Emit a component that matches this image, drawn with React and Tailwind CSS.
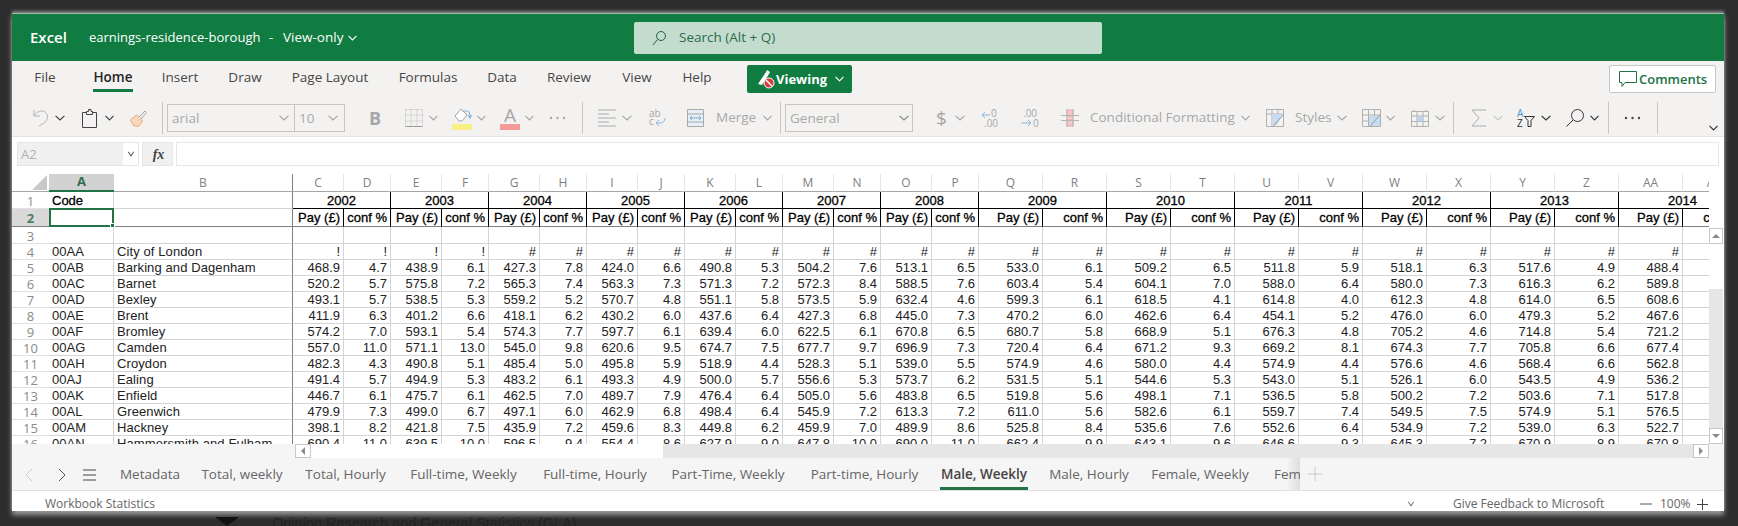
import React from "react";

const COLS = ["A","B","C","D","E","F","G","H","I","J","K","L","M","N","O","P","Q","R","S","T","U","V","W","X","Y","Z","AA","AB"];
const YEARS = [2002,2003,2004,2005,2006,2007,2008,2009,2010,2011,2012,2013,2014];
const ROWS = [
  ["00AB","Barking and Dagenham","468.9 4.7 438.9 6.1 427.3 7.8 424.0 6.6 490.8 5.3 504.2 7.6 513.1 6.5 533.0 6.1 509.2 6.5 511.8 5.9 518.1 6.3 517.6 4.9 488.4"],
  ["00AC","Barnet","520.2 5.7 575.8 7.2 565.3 7.4 563.3 7.3 571.3 7.2 572.3 8.4 588.5 7.6 603.4 5.4 604.1 7.0 588.0 6.4 580.0 7.3 616.3 6.2 589.8"],
  ["00AD","Bexley","493.1 5.7 538.5 5.3 559.2 5.2 570.7 4.8 551.1 5.8 573.5 5.9 632.4 4.6 599.3 6.1 618.5 4.1 614.8 4.0 612.3 4.8 614.0 6.5 608.6"],
  ["00AE","Brent","411.9 6.3 401.2 6.6 418.1 6.2 430.2 6.0 437.6 6.4 427.3 6.8 445.0 7.3 470.2 6.0 462.6 6.4 454.1 5.2 476.0 6.0 479.3 5.2 467.6"],
  ["00AF","Bromley","574.2 7.0 593.1 5.4 574.3 7.7 597.7 6.1 639.4 6.0 622.5 6.1 670.8 6.5 680.7 5.8 668.9 5.1 676.3 4.8 705.2 4.6 714.8 5.4 721.2"],
  ["00AG","Camden","557.0 11.0 571.1 13.0 545.0 9.8 620.6 9.5 674.7 7.5 677.7 9.7 696.9 7.3 720.4 6.4 671.2 9.3 669.2 8.1 674.3 7.7 705.8 6.6 677.4"],
  ["00AH","Croydon","482.3 4.3 490.8 5.1 485.4 5.0 495.8 5.9 518.9 4.4 528.3 5.1 539.0 5.5 574.9 4.6 580.0 4.4 574.9 4.4 576.6 4.6 568.4 6.6 562.8"],
  ["00AJ","Ealing","491.4 5.7 494.9 5.3 483.2 6.1 493.3 4.9 500.0 5.7 556.6 5.3 573.7 6.2 531.5 5.1 544.6 5.3 543.0 5.1 526.1 6.0 543.5 4.9 536.2"],
  ["00AK","Enfield","446.7 6.1 475.7 6.1 462.5 7.0 489.7 7.9 476.4 6.4 505.0 5.6 483.8 6.5 519.8 5.6 498.1 7.1 536.5 5.8 500.2 7.2 503.6 7.1 517.8"],
  ["00AL","Greenwich","479.9 7.3 499.0 6.7 497.1 6.0 462.9 6.8 498.4 6.4 545.9 7.2 613.3 7.2 611.0 5.6 582.6 6.1 559.7 7.4 549.5 7.5 574.9 5.1 576.5"],
  ["00AM","Hackney","398.1 8.2 421.8 7.5 435.9 7.2 459.6 8.3 449.8 6.2 459.9 7.0 489.9 8.6 525.8 8.4 535.6 7.6 552.6 6.4 534.9 7.2 539.0 6.3 522.7"],
  ["00AN","Hammersmith and Fulham","690.4 11.0 639.5 10.0 596.5 9.4 554.4 8.6 627.9 9.0 647.8 10.0 690.0 11.0 662.4 9.9 643.1 9.6 646.6 9.3 645.3 7.2 670.9 8.9 670.8"],
];

const grid = "border-r border-b border-[#d4d4d4]";
const freeze = "border-r border-b border-r-[#808080] border-b-[#d4d4d4]";
const heavy = "text-black [-webkit-text-stroke:0.3px_black]";

function Chev({ c = "#a6a6a6", w = 9, className = "" }) {
  return (
    <svg width={w} height="6" viewBox="0 0 9 6" className={"shrink-0 " + className} preserveAspectRatio="none">
      <path d="M.5 .8 4.5 5 8.5 .8" fill="none" stroke={c} strokeWidth="1.1" />
    </svg>
  );
}
function Sep({ className = "" }) {
  return <div className={"w-px h-[32px] bg-[#c8c6c4] shrink-0 " + className} />;
}
function Dots({ c, className = "" }) {
  return (
    <svg width="17" height="4" viewBox="0 0 17 4" className={"shrink-0 " + className}>
      <circle cx="2" cy="2" r="1.2" fill={c} /><circle cx="8.5" cy="2" r="1.2" fill={c} /><circle cx="15" cy="2" r="1.2" fill={c} />
    </svg>
  );
}
function Ico({ w, h = 18, className = "", children }) {
  return (
    <svg width={w} height={h} viewBox={`0 0 ${w} ${h}`} fill="none" className={"shrink-0 " + className}>
      {children}
    </svg>
  );
}

function Toolbar() {
  const dim = "text-[13.5px] text-[#a8a8a8] whitespace-nowrap leading-none shrink-0";
  return (
    <div className="h-[37px] flex items-center bg-[#f3f2f1] border-b border-[#e4e3e2] shadow-[0_1px_2px_rgba(0,0,0,0.06)]">
      <Ico w={16} className="ml-[21px]"><path d="M1 1v6h6M1 7C4 2 9 1 12 3c4 3 3 8-1 11l-5 3" stroke="#b5b5b5" /></Ico>
      <Chev c="#444" w={10} className="ml-[6px]" />
      <Ico w={15} h={19} className="ml-[17px]"><path d="M4.5 3.5H.5v15h14v-15h-4M4.5 5.5v-3h2V.5h2.5v2h1.500v3z" stroke="#444" /></Ico>
      <Chev c="#444" className="ml-[8px]" />
      <Ico w={17} h={17} className="ml-[16px]">
        <path d="M.5 10 6.500 5l6 6-4 5.500-5-1z" fill="#f8d9bd" stroke="#eaa874" />
        <path d="M9 7l6-6 1.500 1.500L11 9" fill="#eee" stroke="#a6a6a6" />
      </Ico>
      <Sep className="ml-[15px]" />
      <div className="ml-[4px] w-[178px] h-[28px] flex border border-[#c8c6c4] shrink-0">
        <div className="w-[127px] flex items-center justify-between pl-[4px] pr-[5px] border-r border-[#c8c6c4]">
          <span className="text-[13.5px] text-[#a8a8a8]">arial</span><Chev c="#a6a6a6" w={10} />
        </div>
        <div className="flex-1 flex items-center justify-between pl-[4px] pr-[6px]">
          <span className="text-[13.5px] text-[#a8a8a8]">10</span><Chev c="#a6a6a6" w={10} />
        </div>
      </div>
      <span className="ml-[24px] w-[11px] text-[18px] font-bold leading-none text-[#a6a6a6] shrink-0">B</span>
      <Ico w={18} className="ml-[25px]">
        <path d="M.5 .5h17v17H.5zM.5 6h17M.5 12h17M6 .5v17M12 .5v17" stroke="#bdbdbd" strokeDasharray="1 1" />
        <path d="M.5 17.500h17" stroke="#9a9a9a" />
      </Ico>
      <Chev className="ml-[6px]" />
      <div className="ml-[14px] w-[20px] h-[22px] flex flex-col justify-between shrink-0 mt-[2px]">
        <Ico w={20} h={15}>
          <path d="M3 8 9 1l6 6-5 6H7z" stroke="#a3a3a3" fill="#fff" />
          <path d="M10 3h5c2 0 3 2 3 6M16 7l2 3 1.500-3" stroke="#8fb4da" strokeWidth="1.200" />
        </Ico>
        <div className="h-[6px] bg-[#f8ef85]" />
      </div>
      <Chev className="ml-[5px]" />
      <div className="ml-[14px] w-[20px] h-[24px] flex flex-col items-center justify-between shrink-0">
        <span className="text-[19px] leading-[18px] text-[#a6a6a6]">A</span>
        <div className="h-[6px] w-full bg-[#f49a9a]" />
      </div>
      <Chev className="ml-[5px]" />
      <Dots c="#a6a6a6" className="ml-[15px]" />
      <Sep className="ml-[16px]" />
      <Ico w={18} className="ml-[15px]"><path d="M0 1h18M0 5h11M0 9h18M0 13h11M0 17h18" stroke="#aaa" /></Ico>
      <Chev w={10} className="ml-[6px]" />
      <Ico w={18} className="ml-[16px]">
        <text x="1" y="8" fontSize="10" fill="#a6a6a6" fontFamily="Open Sans, sans-serif">ab</text>
        <text x="1" y="16" fontSize="10" fill="#a6a6a6" fontFamily="Open Sans, sans-serif">c</text>
        <path d="M17 9c0 3-2 5-5 5H8m3-3-3 3 3 3" stroke="#8db4da" />
      </Ico>
      <Ico w={17} className="ml-[21px]">
        <path d="M.5 .5h16v17H.5z" fill="#e6eef6" stroke="#a9a9a9" />
        <path d="M.5 5h16M.5 13h16" stroke="#a9a9a9" />
        <path d="M3 9h11M5 7 3 9l2 2M12 7l2 2-2 2" stroke="#7fa9d4" />
      </Ico>
      <span className={"ml-[12px] w-[40px] " + dim}>Merge</span>
      <Chev className="ml-[7px]" />
      <Sep className="ml-[8px]" />
      <div className="ml-[4px] w-[128px] h-[28px] flex items-center justify-between border border-[#c8c6c4] pl-[4px] pr-[3px] shrink-0">
        <span className="text-[13.5px] text-[#a8a8a8]">General</span><Chev c="#8a8a8a" w={10} />
      </div>
      <span className="ml-[23px] w-[9px] text-[19px] leading-none text-[#a6a6a6] shrink-0">$</span>
      <Chev w={10} className="ml-[10px]" />
      <Ico w={19} className="ml-[16px]">
        <text x="10" y="8" fontSize="10" fill="#a6a6a6" fontFamily="Open Sans, sans-serif">0</text>
        <text x="3" y="17.500" fontSize="10" fill="#a6a6a6" fontFamily="Open Sans, sans-serif">.00</text>
        <path d="M9 6H1m3-3L1 6l3 3" stroke="#8db4da" />
      </Ico>
      <Ico w={20} className="ml-[20px]">
        <text x="3" y="8" fontSize="10" fill="#a6a6a6" fontFamily="Open Sans, sans-serif">.00</text>
        <text x="13" y="17.500" fontSize="10" fill="#a6a6a6" fontFamily="Open Sans, sans-serif">0</text>
        <path d="M1 14h10m-3-3 3 3-3 3" stroke="#8db4da" />
      </Ico>
      <Ico w={18} className="ml-[21px]">
        <path d="M6 1h6v7H6zM6 10h6v7H6z" fill="#f7c6c6" stroke="#e9a9a9" />
        <path d="M0 6.500h18M0 11.500h18M6 0v18M12 0v18" stroke="#b5b5b5" />
      </Ico>
      <span className={"ml-[11px] w-[143px] " + dim}>Conditional Formatting</span>
      <Chev className="ml-[8px]" />
      <Ico w={18} className="ml-[16px]">
        <path d="M.5 .5h17v17H.5z" stroke="#b0b0b0" />
        <path d="M.5 5h17M.5 5v12M6 .5v17M12 .5v5" stroke="#b0b0b0" />
        <path d="M6 5h11l-6 11H6z" fill="#c6dcf0" />
        <path d="M17 6 9 15l-2 3" stroke="#9a9a9a" />
      </Ico>
      <span className={"ml-[11px] w-[35px] " + dim}>Styles</span>
      <Chev w={10} className="ml-[7px]" />
      <Ico w={19} className="ml-[15px]">
        <path d="M.5 .5h18v17H.5z" stroke="#b0b0b0" />
        <path d="M.5 6h18M.5 12h18M6.500 .5v17M12.500 .5v17" stroke="#b0b0b0" />
        <path d="M7 7h11v10H7z" fill="#c6dcf0" />
        <path d="M18 6 10 15l-2 3" stroke="#9a9a9a" />
      </Ico>
      <Chev className="ml-[5px]" />
      <Ico w={18} className="ml-[16px]">
        <path d="M.5 2.500h17v15H.5z" stroke="#b0b0b0" />
        <path d="M.5 7h17M.5 12.500h17M6 2.500v15M12 2.500v15M3 .5v2M15 .5v2" stroke="#b0b0b0" />
        <path d="M6 7h6v5.500H6z" fill="#bcd5ec" />
      </Ico>
      <Chev w={10} className="ml-[6px]" />
      <Sep className="ml-[8px]" />
      <Ico w={15} className="ml-[17px]"><path d="M15 1H1l7 8-7 8h14" stroke="#aaa" /></Ico>
      <Chev w={10} c="#c8c8c8" className="ml-[7px]" />
      <Ico w={18} className="ml-[14px]">
        <text x="0" y="8" fontSize="10" fill="#4a90d0" fontFamily="Open Sans, sans-serif">A</text>
        <text x="0" y="18" fontSize="10" fill="#333" fontFamily="Open Sans, sans-serif">Z</text>
        <path d="M7.500 7.500h10l-3.500 4v6h-3v-6z" stroke="#333" />
      </Ico>
      <Chev c="#333" w={10} className="ml-[6px]" />
      <Ico w={18} className="ml-[15px]"><circle cx="11.500" cy="6.500" r="6" stroke="#333" /><path d="M7 11 .5 17.500" stroke="#333" /></Ico>
      <Chev c="#333" className="ml-[6px]" />
      <Sep className="ml-[9px]" />
      <Dots c="#444" className="ml-[15px]" />
      <Sep className="ml-[16px]" />
      <Chev c="#333" className="ml-[51px] mt-[20px]" />
    </div>
  );
}

function MenuItem({ w, active, children }) {
  return (
    <div className={"h-[31px] flex justify-center " + w}>
      <div className={"h-full pt-[7px] text-[13.5px] leading-[18px] whitespace-nowrap text-center border-b-[3px] " + (active ? "border-[#107c41] text-[#252423] font-semibold" : "border-transparent text-[#484644]")}>{children}</div>
    </div>
  );
}

function Menu() {
  return (
    <div className="h-[39px] flex items-start bg-[#f3f2f1] pl-[4px]">
      <MenuItem w="w-[58px]">File</MenuItem>
      <MenuItem w="w-[78px]" active>Home</MenuItem>
      <MenuItem w="w-[56px]">Insert</MenuItem>
      <MenuItem w="w-[74px]">Draw</MenuItem>
      <MenuItem w="w-[96px]">Page Layout</MenuItem>
      <MenuItem w="w-[100px]">Formulas</MenuItem>
      <MenuItem w="w-[48px]">Data</MenuItem>
      <MenuItem w="w-[86px]">Review</MenuItem>
      <MenuItem w="w-[50px]">View</MenuItem>
      <MenuItem w="w-[70px]">Help</MenuItem>
      <div className="ml-[15px] mt-[4px] w-[105px] h-[28px] bg-[#107c41] rounded-[2px] flex items-center pl-[10px] text-white shrink-0">
        <Ico w={18} h={20}>
          <path d="M1 15 9 3l3 2-7 11z" fill="#fff" />
          <path d="M9 3l1-2 3 2-1 2" fill="#fff" />
          <circle cx="12" cy="14" r="5" fill="#d83b3b" stroke="#fff" />
          <path d="M9 11l6 6" stroke="#fff" strokeWidth="1.500" />
        </Ico>
        <span className="ml-[1px] w-[52px] text-[13px] font-bold whitespace-nowrap leading-none">Viewing</span>
        <Chev c="#fff" className="ml-[7px]" />
      </div>
      <div className="ml-[757px] mt-[4px] w-[107px] h-[28px] bg-white border border-[#c8c6c4] rounded-[2px] flex items-center pl-[9px] shrink-0">
        <Ico w={19} h={18}>
          <path d="M.5 1.500h17v11H6l-3 4v-4H.5z" stroke="#217346" />
        </Ico>
        <span className="ml-[1px] text-[13px] font-semibold text-[#217346] whitespace-nowrap leading-none">Comments</span>
      </div>
    </div>
  );
}

function Cell({ className = "", children }) {
  return <div className={"flex items-center whitespace-nowrap overflow-hidden leading-none px-[3px] " + className}>{children}</div>;
}

function RowHead({ n, selected }) {
  return (
    <div className={"flex items-center justify-center leading-none text-[13px] pt-[2px] font-['Open_Sans',sans-serif] " + (selected ? "bg-[#d9d9d9] font-bold text-[#4f7f62] border-b border-[#808080]" : "bg-white text-[#8a8a8a] border-b border-[#e2e2e2]")}>
      {n}
    </div>
  );
}

function Sheet() {
  const cols = COLS.slice(2);
  return (
    <div className="w-[1697px] h-[270px] overflow-hidden shrink-0">
      <div className="grid w-[1735px] grid-cols-[37px_65px_179px_51px_47px_51px_47px_51px_47px_51px_47px_51px_47px_51px_47px_51px_47px_64px_64px_64px_64px_64px_64px_64px_64px_64px_64px_64px_64px] auto-rows-[16px] grid-rows-[18px_17px_18px_17px] font-['Liberation_Sans',Arial,sans-serif] text-[13px] text-[#222]">
        {/* column headers */}
        <div className="bg-white border-b border-[#a6a6a6] flex items-center justify-end pr-[2px]">
          <svg width="15" height="15" viewBox="0 0 15 15"><path d="M15 0v15H0z" fill="#c9c9c9" /></svg>
        </div>
        <div className="bg-[#d2d2d2] border-b-2 border-[#217346] flex items-center justify-center text-[13px] font-bold text-[#2f6f4b] font-['Open_Sans',sans-serif]">A</div>
        <div className="bg-white border-b border-r border-b-[#a6a6a6] border-r-[#808080] flex items-center justify-center text-[12px] text-[#808080] font-['Open_Sans',sans-serif]">B</div>
        {cols.map((c) => (
          <div key={c} className="bg-white border-b border-r border-b-[#a6a6a6] border-r-[#e6e6e6] flex items-center justify-center text-[12px] text-[#808080] font-['Open_Sans',sans-serif]">{c}</div>
        ))}

        {/* row 1 */}
        <RowHead n={1} />
        <Cell className={heavy + " " + grid}>Code</Cell>
        <Cell className={freeze} />
        {YEARS.map((y) => (
          <Cell key={y} className={"col-span-2 justify-center border-r border-b border-black " + heavy}>{y}</Cell>
        ))}

        {/* row 2 */}
        <RowHead n={2} selected />
        <div className="relative border-2 border-[#217346] -mt-px bg-white">
          <div className="absolute right-[-3px] bottom-[-3px] w-[5px] h-[5px] bg-[#217346] border border-white" />
        </div>
        <div className="border-r border-b border-r-[#808080] border-b-[#808080]" />
        {cols.map((c, i) => (
          <Cell key={c} className={"justify-end border-r border-r-black border-b border-b-[#808080] " + heavy}>{i % 2 === 0 ? "Pay (£)" : "conf %"}</Cell>
        ))}

        {/* row 3 */}
        <RowHead n={3} />
        <Cell className={grid} />
        <Cell className={freeze} />
        {cols.map((c) => <Cell key={c} className={grid} />)}

        {/* row 4 */}
        <RowHead n={4} />
        <Cell className={grid}>00AA</Cell>
        <Cell className={freeze + " tracking-[0.1px]"}>City of London</Cell>
        {cols.map((c, i) => (
          <Cell key={c} className={"justify-end " + grid}>{i < 4 ? "!" : "#"}</Cell>
        ))}

        {ROWS.map(([code, name, vals], r) => {
          const v = vals.split(" ");
          return (
            <React.Fragment key={code}>
              <RowHead n={r + 5} />
              <Cell className={grid}>{code}</Cell>
              <Cell className={freeze + " tracking-[0.1px]"}>{name}</Cell>
              {cols.map((c, i) => (
                <Cell key={c} className={"justify-end " + grid}>{v[i] || ""}</Cell>
              ))}
            </React.Fragment>
          );
        })}
      </div>
    </div>
  );
}

function ScrollBtn({ d, className = "" }) {
  return (
    <div className={"bg-white border border-[#c8c8c8] flex items-center justify-center shrink-0 " + className}>
      <svg width="8" height="8" viewBox="0 0 8 8"><path d={d} fill="#8a8a8a" /></svg>
    </div>
  );
}

function VScroll() {
  return (
    <div className="w-[14px] h-[270px] flex flex-col bg-[#e6e6e6] shrink-0">
      <div className="h-[54px] bg-white shrink-0" />
      <ScrollBtn d="M0 6l4-4 4 4z" className="h-[16px]" />
      <div className="h-[45px] bg-white shrink-0" />
      <div className="flex-1" />
      <ScrollBtn d="M0 2l4 4 4-4z" className="h-[16px]" />
    </div>
  );
}

function HScroll() {
  return (
    <div className="h-[14px] flex bg-[#f5f5f5] shrink-0">
      <div className="w-[283px] shrink-0" />
      <ScrollBtn d="M6 0 2 4l4 4z" className="w-[16px]" />
      <div className="w-[352px] bg-white shrink-0" />
      <div className="w-[1030px] bg-[#e6e6e6] shrink-0" />
      <ScrollBtn d="M2 0l4 4-4 4z" className="w-[16px]" />
    </div>
  );
}

function Tab({ w, active, children }) {
  return (
    <div className={"h-[32px] flex justify-center shrink-0 " + w}>
      <div className={"h-full pt-[7px] text-[13.5px] leading-[18px] whitespace-nowrap border-b-[3px] px-[1px] " + (active ? "border-[#217346] font-semibold text-[#444]" : "border-transparent text-[#666]")}>{children}</div>
    </div>
  );
}

function Tabs() {
  return (
    <div className="h-[33px] flex items-start bg-[#f5f5f5] border-b border-[#e1e1e1] shrink-0">
      <div className="w-[96px] h-[32px] flex items-center shrink-0 pt-[2px]">
        <svg width="8" height="14" viewBox="0 0 8 14" className="ml-[13px]"><path d="M7 1 1 7l6 6" fill="none" stroke="#c8c8c8" /></svg>
        <svg width="8" height="14" viewBox="0 0 8 14" className="ml-[25px]"><path d="M1 1l6 6-6 6" fill="none" stroke="#555" /></svg>
        <svg width="13" height="12" viewBox="0 0 13 12" className="ml-[17px]"><path d="M0 1h13M0 6h13M0 11h13" stroke="#444" /></svg>
      </div>
      <Tab w="w-[84px]">Metadata</Tab>
      <Tab w="w-[100px]">Total, weekly</Tab>
      <Tab w="w-[107px]">Total, Hourly</Tab>
      <Tab w="w-[129px]">Full-time, Weekly</Tab>
      <Tab w="w-[134px]">Full-time, Hourly</Tab>
      <Tab w="w-[132px]">Part-Time, Weekly</Tab>
      <Tab w="w-[141px]">Part-time, Hourly</Tab>
      <Tab w="w-[98px]" active>Male, Weekly</Tab>
      <Tab w="w-[112px]">Male, Hourly</Tab>
      <Tab w="w-[110px]">Female, Weekly</Tab>
      <div className="w-[45px] h-[32px] overflow-hidden pl-[19px] pt-[7px] text-[13.5px] leading-[18px] text-[#666] whitespace-nowrap bg-gradient-to-r from-transparent from-[70%] to-[#dedede] shrink-0">Female, Hourly</div>
      <svg width="14" height="14" viewBox="0 0 14 14" className="ml-[8px] mt-[9px]"><path d="M7 0v14M0 7h14" stroke="#c8c8c8" /></svg>
    </div>
  );
}

function Status() {
  return (
    <div className="h-[20px] flex items-center pt-[6px] bg-white text-[12px] text-[#666] leading-none shrink-0">
      <span className="ml-[33px] w-[104px] whitespace-nowrap shrink-0">Workbook Statistics</span>
      <Chev c="#666" w={6} className="ml-[1259px]" />
      <span className="ml-[39px] w-[144px] whitespace-nowrap shrink-0">Give Feedback to Microsoft</span>
      <svg width="12" height="2" viewBox="0 0 12 2" className="ml-[43px] shrink-0"><path d="M0 1h12" stroke="#555" /></svg>
      <span className="ml-[8px] w-[29px] whitespace-nowrap shrink-0">100%</span>
      <svg width="11" height="11" viewBox="0 0 11 11" className="ml-[8px] shrink-0"><path d="M5.500 0v11M0 5.500h11" stroke="#444" /></svg>
    </div>
  );
}

export default function App() {
  return (
    <div className="w-[1738px] h-[526px] overflow-hidden bg-[#2d2d2d] pt-[13px] pl-[12px] font-['Open_Sans',sans-serif]">
      <div className="w-[1712px] h-[498px] bg-white flex flex-col shadow-[0_4px_5px_rgba(190,190,190,0.75),0_-2px_3px_rgba(190,190,190,0.6)]">
        <div className="h-[48px] bg-[#107c41] flex items-center shrink-0 border-t border-[#9dbfab]">
          <span className="ml-[18px] w-[37px] text-[15px] font-semibold text-white whitespace-nowrap">Excel</span>
          <span className="ml-[22px] w-[177px] text-[13px] text-white whitespace-nowrap">earnings-residence-borough</span>
          <span className="ml-[3px] w-[5px] text-[13px] text-white">-</span>
          <span className="ml-[9px] w-[62px] text-[13.5px] font-medium text-white whitespace-nowrap">View-only</span>
          <Chev c="#fff" className="ml-[3px]" />
          <div className="ml-[277px] w-[468px] h-[32px] bg-[#c4dccd] rounded-[2px] flex items-center pl-[18px] shrink-0">
            <Ico w={14} h={16}><circle cx="9" cy="6" r="4.500" stroke="#22633f" /><path d="M5.500 9.500 1 15" stroke="#22633f" /></Ico>
            <span className="ml-[13px] text-[13.5px] text-[#2b6b4a] whitespace-nowrap">Search (Alt + Q)</span>
          </div>
        </div>
        <Menu />
        <Toolbar />
        <div className="h-[5px] bg-white shrink-0" />
        <div className="h-[24px] flex px-[5px] gap-[3px] shrink-0">
          <div className="w-[122px] flex border border-[#e6e6e6] bg-[#f0f0f0] shrink-0">
            <span className="flex-1 pl-[3px] text-[13px] leading-[22px] text-[#b0b0b0]">A2</span>
            <div className="w-[15px] bg-white flex items-center justify-center"><Chev c="#444" w={6} /></div>
          </div>
          <div className="w-[31px] bg-[#f0f0f0] border border-[#e6e6e6] flex items-center justify-center text-[14px] italic font-bold text-[#444] font-['Liberation_Serif',serif] shrink-0 pl-[2px]">fx</div>
          <div className="flex-1 bg-white border border-[#e6e6e6]" />
        </div>
        <div className="h-[8px] shrink-0" />
        <div className="flex h-[270px] shrink-0">
          <Sheet />
          <VScroll />
        </div>
        <HScroll />
        <Tabs />
        <Status />
      </div>
      <div className="h-[15px] overflow-hidden flex items-start">
        <svg width="24" height="12" viewBox="0 0 24 12" className="ml-[203px] mt-[6px] shrink-0"><path d="M0 0h24L12 9z" fill="#111" /></svg>
        <span className="ml-[33px] mt-[3px] text-[14.5px] leading-[18px] text-[#222] font-['Liberation_Sans',sans-serif] whitespace-nowrap">Opinion Research and General Statistics (GLA)</span>
      </div>
    </div>
  );
}
